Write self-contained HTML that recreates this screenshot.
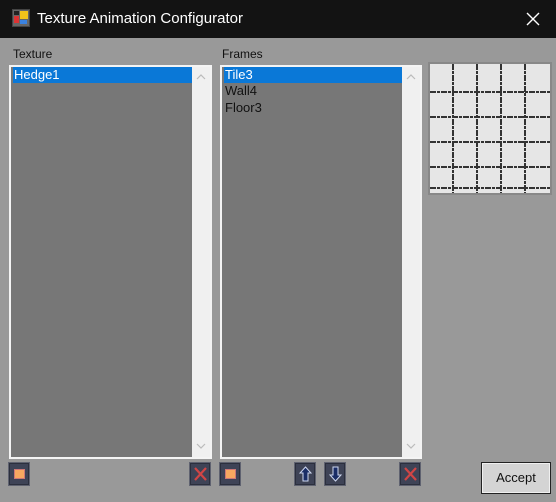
<!DOCTYPE html><html><head><style>
*{margin:0;padding:0;box-sizing:border-box}
body{width:556px;height:502px;background:#999;font-family:"Liberation Sans",sans-serif;position:relative;overflow:hidden}
.abs{position:absolute}
.title{left:0;top:0;width:556px;height:38px;background:#131313}
.ttext{left:37px;top:10px;color:#fff;font-size:15px}
.lbl{font-size:12px;color:#111}
.list{background:#777;border:2px solid #f4f4f4;}
.sb{background:#f0f0f0;}
.item{position:absolute;left:2px;height:16px;font-size:13px;line-height:16px;padding-left:1px;color:#111}
.sel{background:#0a78d7;color:#fff}
.btn{width:22px;height:24px;background:#3e4356;border:1px solid #5f6270;box-shadow:inset 0 0 0 1px #2b2f3d}
.acc{left:481px;top:462px;width:70px;height:32px;border:1px solid #222;background:#d4d4d4;font-size:13px;text-align:center;line-height:30px;color:#111;box-shadow:inset 0 0 0 1px #f0f0f0}
</style></head><body>
<div class="abs title"></div>
<svg class="abs" style="left:12px;top:9px" width="18" height="18"><rect x="0" y="0" width="18" height="18" fill="#444"/><rect x="1" y="1" width="16" height="16" fill="#666"/><rect x="2" y="2" width="5" height="4" fill="#222"/><rect x="8" y="2" width="8" height="8" fill="#f2c31b"/><rect x="2" y="7" width="5" height="7" fill="#d33"/><rect x="8" y="11" width="7" height="4" fill="#3a82e0"/></svg>
<div class="abs ttext">Texture Animation Configurator</div>
<svg class="abs" style="left:526px;top:12px" width="14" height="14"><path d="M1 1L13 13M13 1L1 13" stroke="#fff" stroke-width="1.4"/></svg>
<div class="abs lbl" style="left:13px;top:47px">Texture</div>
<div class="abs lbl" style="left:222px;top:47px">Frames</div>
<div class="abs list" style="left:9px;top:65px;width:203px;height:394px">
<div class="item sel" style="top:0;width:179px">Hedge1</div>
<div class="abs sb" style="right:0;top:0;width:18px;height:390px"></div>
<svg class="abs" style="right:4px;top:7px" width="10" height="6"><path d="M1 5L5 1L9 5" stroke="#bbb" fill="none" stroke-width="1.2"/></svg>
<svg class="abs" style="right:4px;top:376px" width="10" height="6"><path d="M1 1L5 5L9 1" stroke="#bbb" fill="none" stroke-width="1.2"/></svg>
</div>
<div class="abs list" style="left:220px;top:65px;width:202px;height:394px">
<div class="item sel" style="top:0;width:178px">Tile3</div>
<div class="item" style="top:16px">Wall4</div>
<div class="item" style="top:33px">Floor3</div>
<div class="abs sb" style="right:0;top:0;width:18px;height:390px"></div>
<svg class="abs" style="right:4px;top:7px" width="10" height="6"><path d="M1 5L5 1L9 5" stroke="#bbb" fill="none" stroke-width="1.2"/></svg>
<svg class="abs" style="right:4px;top:376px" width="10" height="6"><path d="M1 1L5 5L9 1" stroke="#bbb" fill="none" stroke-width="1.2"/></svg>
</div>
<svg class="abs" style="left:428px;top:62px" width="124" height="133">
<rect width="124" height="133" fill="#888"/><rect x="2" y="2" width="120" height="129" fill="#e6e6e6"/>
<g stroke="#333" stroke-width="2" stroke-dasharray="6 1 3 1">
<path d="M25 2V131M49 2V131M73 2V131M97 2V131"/>
<path d="M2 30H122M2 55H122M2 80H122M2 105H122M2 126H122"/>
</g></svg>
<div class="abs btn" style="left:8px;top:462px"><div class="abs" style="left:5px;top:6px;width:11px;height:10px;background:#f7a860;border:1px solid #c77"></div></div>
<div class="abs btn" style="left:189px;top:462px"><svg class="abs" style="left:3px;top:3px" width="15" height="16"><path d="M2 2L13 14M13 2L2 14" stroke="#d04545" stroke-width="2.2"/></svg></div>
<div class="abs btn" style="left:219px;top:462px"><div class="abs" style="left:5px;top:6px;width:11px;height:10px;background:#f7a860;border:1px solid #c77"></div></div>
<div class="abs btn" style="left:294px;top:462px"><svg class="abs" style="left:4px;top:3px" width="13" height="16"><path d="M6.5 1L12 7H9V15H4V7H1Z" fill="#1a2d66" stroke="#cfd8f0" stroke-width="1"/></svg></div>
<div class="abs btn" style="left:324px;top:462px"><svg class="abs" style="left:4px;top:3px" width="13" height="16"><path d="M6.5 15L12 9H9V1H4V9H1Z" fill="#1a2d66" stroke="#cfd8f0" stroke-width="1"/></svg></div>
<div class="abs btn" style="left:399px;top:462px"><svg class="abs" style="left:3px;top:3px" width="15" height="16"><path d="M2 2L13 14M13 2L2 14" stroke="#d04545" stroke-width="2.2"/></svg></div>
<div class="abs acc">Accept</div>
</body></html>
